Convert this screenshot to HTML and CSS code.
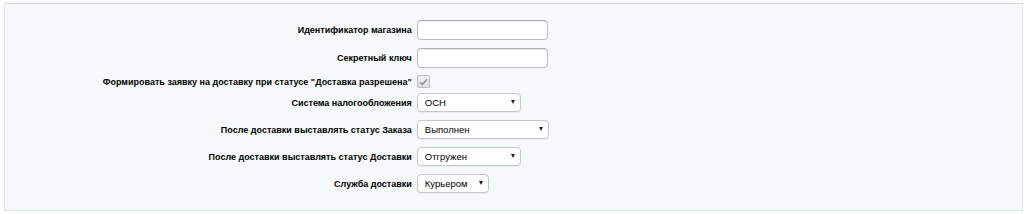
FILE: index.html
```html
<!DOCTYPE html>
<html lang="ru">
<head>
  <meta charset="UTF-8">
  <meta name="viewport" content="width=device-width, initial-scale=1.0">
  <title>Настройки доставки</title>
  <link rel="stylesheet" href="styles.css">
</head>
<body>
  <div class="settings-panel">
    <div class="form-row">
      <label class="form-label" for="shopId">Идентификатор магазина</label>
      <div class="form-field">
        <input type="text" id="shopId" class="text-input">
      </div>
    </div>

    <div class="form-row">
      <label class="form-label" for="secretKey">Секретный ключ</label>
      <div class="form-field">
        <input type="text" id="secretKey" class="text-input">
      </div>
    </div>

    <div class="form-row form-row-check">
      <label class="form-label">Формировать заявку на доставку при статусе "Доставка разрешена"</label>
      <div class="form-field">
        <span class="check-box">
          <svg width="9" height="8" viewBox="0 0 9 8"><path d="M1 4.2 L3.4 6.5 L8 1.2" fill="none" stroke="#8a8f91" stroke-width="1.4"/></svg>
        </span>
      </div>
    </div>

    <div class="form-row">
      <label class="form-label" for="taxSystem">Система налогообложения</label>
      <div class="form-field">
        <span class="select-wrap">
          <select id="taxSystem" class="select select-md">
            <option>ОСН</option>
          </select>
        </span>
      </div>
    </div>

    <div class="form-row">
      <label class="form-label" for="orderStatus">После доставки выставлять статус Заказа</label>
      <div class="form-field">
        <span class="select-wrap">
          <select id="orderStatus" class="select select-lg">
            <option>Выполнен</option>
          </select>
        </span>
      </div>
    </div>

    <div class="form-row">
      <label class="form-label" for="shipStatus">После доставки выставлять статус Доставки</label>
      <div class="form-field">
        <span class="select-wrap">
          <select id="shipStatus" class="select select-md">
            <option>Отгружен</option>
          </select>
        </span>
      </div>
    </div>

    <div class="form-row">
      <label class="form-label" for="service">Служба доставки</label>
      <div class="form-field">
        <span class="select-wrap">
          <select id="service" class="select select-sm">
            <option>Курьером</option>
          </select>
        </span>
      </div>
    </div>
  </div>
</body>
</html>
```

FILE: styles.css
```css
* {
  box-sizing: border-box;
  margin: 0;
  padding: 0;
}

body {
  font-family: "Liberation Sans", Arial, sans-serif;
  font-size: 9px;
  color: #000;
  background: #fff;
  padding: 3px 1px 0 4px;
}

.settings-panel {
  background: #f5f9f9;
  border: 1px solid #dde3e4;
  border-top-color: #d3d9da;
  padding: 12px 0 12px;
  height: 208px;
}

.form-row {
  display: grid;
  grid-template-columns: 40% 60%;
  align-items: center;
  padding: 4px 0;
}

.form-row:nth-child(4) {
  padding-top: 3px;
}

.form-row-check {
  padding: 3px 0 2px;
}

.form-label {
  text-align: right;
  font-weight: bold;
  padding-right: 0;
}

.form-field {
  padding-left: 5px;
  display: flex;
  align-items: center;
}

.text-input {
  width: 131px;
  height: 20px;
  border: 1px solid #b9bfc1;
  border-top-color: #a9afb1;
  border-radius: 4px;
  background: #fff;
  box-shadow: inset 0 1px 1px rgba(0, 0, 0, 0.08);
  font: inherit;
  padding: 0 4px;
}

.check-box {
  width: 13px;
  height: 13px;
  border: 1px solid #b8bdbf;
  border-radius: 2px;
  background: linear-gradient(#f1f2f2, #dcdfe0);
  display: flex;
  align-items: center;
  justify-content: center;
}

.select-wrap {
  position: relative;
  display: inline-block;
}

.select-wrap::after {
  content: "";
  position: absolute;
  right: 6px;
  top: 7px;
  border-left: 2.5px solid transparent;
  border-right: 2.5px solid transparent;
  border-top: 4px solid #222;
  pointer-events: none;
}

.select {
  appearance: none;
  -webkit-appearance: none;
  height: 19px;
  border: 1px solid #c3c8ca;
  border-radius: 4px;
  background: #fff;
  font: inherit;
  font-size: 9.5px;
  color: #000;
  padding: 0 16px 0 7px;
  box-shadow: 0 1px 1px rgba(0, 0, 0, 0.05);
}

.select-sm {
  width: 72px;
}

.select-md {
  width: 104px;
}

.select-lg {
  width: 132px;
}
```
